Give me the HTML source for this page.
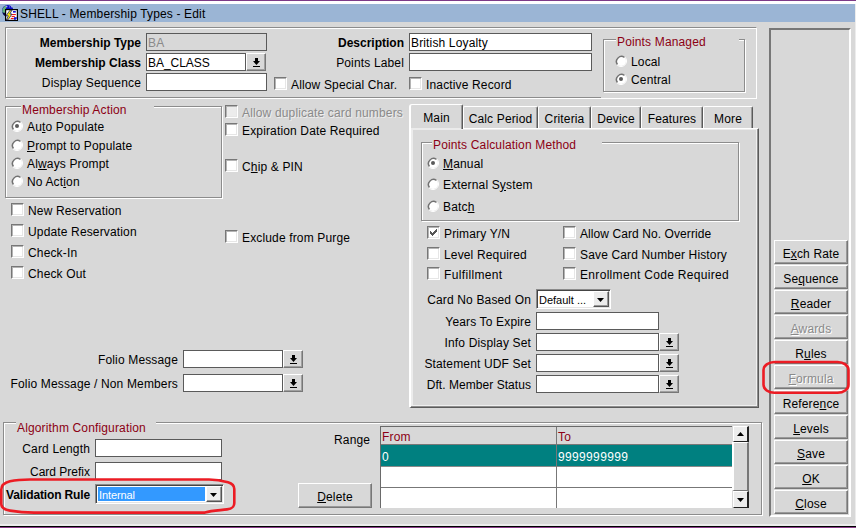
<!DOCTYPE html>
<html>
<head>
<meta charset="utf-8">
<title>SHELL - Membership Types - Edit</title>
<style>
html,body{margin:0;padding:0}
body{width:856px;height:528px;position:relative;overflow:hidden;background:#d8d8d8;font-family:"Liberation Sans",sans-serif;font-size:12px;letter-spacing:.15px;color:#000}
div,span{box-sizing:border-box}
.a{position:absolute}
.t{position:absolute;white-space:nowrap;line-height:15px;height:15px;font-size:12px;letter-spacing:.15px}
.r{text-align:right}
.b{font-weight:bold;letter-spacing:0}
.m{color:#8c0014}
.g{color:#8a8a8a}
.btn.g{text-shadow:1px 1px 0 #fff}
u{text-decoration:underline;text-underline-offset:1px;text-decoration-thickness:1px}
.f{position:absolute;border:1px solid #5a5a5a;background:#fff;height:18px;font-size:12px;line-height:16px;padding:1px 0 0 1px;white-space:nowrap;overflow:hidden}
.cb{position:absolute;width:13px;height:13px;background:#fff;border-top:1px solid #777;border-left:1px solid #777;border-right:1px solid #fff;border-bottom:1px solid #fff;box-shadow:inset 1px 1px 0 #b4b4b4,inset -1px -1px 0 #e6e6e6}
.cb.d{background:#ececec}
.rb{position:absolute;width:12px;height:12px;border-radius:50%;background:#fff;border:1px solid #fff;border-top-color:#777;border-left-color:#777;box-shadow:inset 1px 1px 0 #aaa}
.rb.on:after{content:"";position:absolute;left:3px;top:3px;width:4px;height:4px;border-radius:50%;background:#555}
.lb{position:absolute;width:20px;height:18px;background:#d8d8d8;border-top:1px solid #fff;border-left:1px solid #fff;border-right:1px solid #777;border-bottom:1px solid #777;box-shadow:inset -1px -1px 0 #a0a0a0}
.lb svg{position:absolute;left:6px;top:4px}
.gb{position:absolute;border:1px solid #8c8c8c;box-shadow:1px 1px 0 #fff,inset 1px 1px 0 #fff}
.gt{position:absolute;white-space:nowrap;line-height:15px;height:15px;font-size:12px;color:#8c0014;background:#d8d8d8;padding:0 1px}
.btn{position:absolute;left:774px;width:74px;height:24px;background:#d8d8d8;border-top:1px solid #fff;border-left:1px solid #fff;border-right:1px solid #777;border-bottom:1px solid #777;box-shadow:inset -1px -1px 0 #999;text-align:center;font-size:12px;line-height:26px}
.tab{position:absolute;top:106px;height:22px;background:#d8d8d8;border-top:1px solid #fff;border-left:1px solid #fff;border-right:1px solid #5a5a5a;border-radius:2px 2px 0 0;box-shadow:inset -1px 0 0 #9a9a9a;text-align:center;font-size:12px;line-height:25px}
</style>
</head>
<body>
<!-- window chrome -->
<div class="a" style="left:0;top:0;width:856px;height:1px;background:#7d3a86"></div>
<div class="a" style="left:0;top:1px;width:856px;height:3px;background:#fff"></div>
<div class="a" style="left:0;top:4px;width:855px;height:18px;background:#9bb5d5"></div>
<div class="a" style="left:855px;top:4px;width:1px;height:520px;background:#ececec"></div>
<div class="a" style="left:0;top:524px;width:856px;height:2px;background:#ececec"></div>
<div class="a" style="left:0;top:526px;width:856px;height:1px;background:#000"></div>
<div class="a" style="left:0;top:527px;width:856px;height:1px;background:#8a3f8a"></div>
<!-- title icon -->
<svg class="a" style="left:0;top:4px" width="20" height="18" viewBox="0 4 20 18">
<circle cx="7.700" cy="10.500" r="5.600" fill="#0a0ac0"/>
<path d="M2.300 12 C2 9 3.500 6.500 6 5.500 L6.500 7.500 L5 10 L5.500 13 L4 14.500 Z" fill="#5fb27e"/>
<path d="M2.400 12.500 C3 15 4.500 16 6 16.200 L6 13 Z" fill="#08084a"/>
<rect x="5.800" y="5.800" width="1.600" height="1.400" fill="#a9a4e8"/>
<rect x="9" y="6.300" width="1.200" height="1.200" fill="#6f6fe0"/>
<rect x="11" y="6.300" width="1.200" height="1" fill="#c8c8f4"/>
<rect x="5.600" y="9.600" width="11.800" height="10.800" fill="#fff" stroke="#000" stroke-width="1.200"/>
<rect x="13" y="11" width="2.800" height="1.600" fill="#1414d2"/>
<rect x="12" y="14" width="3.800" height="1.100" fill="#f01414"/>
<rect x="11.600" y="16" width="3.200" height="1.100" fill="#f01414"/>
<rect x="10.800" y="18" width="3" height="1.100" fill="#f01414"/>
<rect x="14" y="17.200" width="2.800" height="2.600" fill="#1414d2"/>
<rect x="15.800" y="18.800" width="1" height="1" fill="#fff"/>
<path d="M12 10.200 L10 10.200 L6 15.800 L8.400 15.800 L6.400 19.800 L8 19.800 L12 14 L9.800 14 Z" fill="#fff200" stroke="#14146e" stroke-width=".8"/>
</svg>
<div class="t" style="left:20px;top:7px;">SHELL - Membership Types - Edit</div>

<!-- top frame -->
<div class="a" style="left:5px;top:27px;width:752px;height:72px;border-top:1px solid #8c8c8c;border-left:1px solid #8c8c8c;border-right:1px solid #fff;border-bottom:1px solid #fff;box-shadow:inset 1px 1px 0 #fff"></div>
<div class="a" style="left:6px;top:97px;width:595px;height:1px;background:#8c8c8c"></div>

<div class="t r b" style="left:0;width:141px;top:36px">Membership Type</div>
<div class="t r b" style="left:0;width:141px;top:56px">Membership Class</div>
<div class="t r" style="left:0;width:141px;top:76px">Display Sequence</div>
<div class="f g" style="left:146px;top:33px;width:121px;background:#d8d8d8">BA</div>
<div class="f" style="left:146px;top:53px;width:100px;letter-spacing:-.03px">BA_CLASS</div>
<div class="lb" style="left:246px;top:53px"><svg width="7" height="9" viewBox="0 0 7 9"><path d="M2 0h3v3h2l-3.500 4l-3.500-4h2z M0 8h7v1h-7z" fill="#000"/></svg></div>
<div class="f" style="left:146px;top:73px;width:121px"></div>
<div class="cb" style="left:274px;top:77px"></div>
<div class="t" style="left:291px;top:78px">Allow Special Char.</div>

<div class="t r b" style="left:300px;width:104px;top:36px">Description</div>
<div class="t r" style="left:300px;width:104px;top:56px">Points Label</div>
<div class="f" style="left:409px;top:33px;width:183px">British Loyalty</div>
<div class="f" style="left:409px;top:53px;width:183px"></div>
<div class="cb" style="left:409px;top:77px"></div>
<div class="t" style="left:426px;top:78px">Inactive Record</div>

<div class="gb" style="left:603px;top:39px;width:142px;height:53px"></div>
<div class="gt" style="left:616px;top:35px;width:123px">Points Managed</div>
<svg class="a" style="left:615px;top:55px" width="12" height="12" viewBox="0 0 12 12"><circle cx="6" cy="6" r="5" fill="#fff"/><path d="M2.500 9.500A5 5 0 0 1 9.500 2.500" stroke="#727272" stroke-width="1.500" fill="none"/><path d="M9.900 2.100A5.500 5.500 0 0 1 2.100 9.900" stroke="#fff" stroke-width="1" fill="none"/></svg>
<div class="t" style="left:631px;top:55px">Local</div>
<svg class="a" style="left:615px;top:73px" width="12" height="12" viewBox="0 0 12 12"><circle cx="6" cy="6" r="5" fill="#fff"/><path d="M2.500 9.500A5 5 0 0 1 9.500 2.500" stroke="#727272" stroke-width="1.500" fill="none"/><path d="M9.900 2.100A5.500 5.500 0 0 1 2.100 9.900" stroke="#fff" stroke-width="1" fill="none"/><circle cx="6" cy="6" r="2" fill="#5a5a5a"/></svg>
<div class="t" style="left:631px;top:73px">Central</div>

<!-- Membership Action -->
<div class="gb" style="left:5px;top:106px;width:217px;height:92px"></div>
<div class="gt" style="left:21px;top:103px;width:133px">Membership Action</div>
<svg class="a" style="left:11px;top:120px" width="12" height="12" viewBox="0 0 12 12"><circle cx="6" cy="6" r="5" fill="#fff"/><path d="M2.500 9.500A5 5 0 0 1 9.500 2.500" stroke="#727272" stroke-width="1.500" fill="none"/><path d="M9.900 2.100A5.500 5.500 0 0 1 2.100 9.900" stroke="#fff" stroke-width="1" fill="none"/><circle cx="6" cy="6" r="2" fill="#5a5a5a"/></svg>
<div class="t" style="left:27px;top:120px">Au<u>t</u>o Populate</div>
<svg class="a" style="left:11px;top:139px" width="12" height="12" viewBox="0 0 12 12"><circle cx="6" cy="6" r="5" fill="#fff"/><path d="M2.500 9.500A5 5 0 0 1 9.500 2.500" stroke="#727272" stroke-width="1.500" fill="none"/><path d="M9.900 2.100A5.500 5.500 0 0 1 2.100 9.900" stroke="#fff" stroke-width="1" fill="none"/></svg>
<div class="t" style="left:27px;top:139px"><u>P</u>rompt to Populate</div>
<svg class="a" style="left:11px;top:157px" width="12" height="12" viewBox="0 0 12 12"><circle cx="6" cy="6" r="5" fill="#fff"/><path d="M2.500 9.500A5 5 0 0 1 9.500 2.500" stroke="#727272" stroke-width="1.500" fill="none"/><path d="M9.900 2.100A5.500 5.500 0 0 1 2.100 9.900" stroke="#fff" stroke-width="1" fill="none"/></svg>
<div class="t" style="left:27px;top:157px">Al<u>w</u>ays Prompt</div>
<svg class="a" style="left:11px;top:175px" width="12" height="12" viewBox="0 0 12 12"><circle cx="6" cy="6" r="5" fill="#fff"/><path d="M2.500 9.500A5 5 0 0 1 9.500 2.500" stroke="#727272" stroke-width="1.500" fill="none"/><path d="M9.900 2.100A5.500 5.500 0 0 1 2.100 9.900" stroke="#fff" stroke-width="1" fill="none"/></svg>
<div class="t" style="left:27px;top:175px">No Act<u>i</u>on</div>

<div class="cb" style="left:11px;top:203px"></div>
<div class="t" style="left:28px;top:204px">New Reservation</div>
<div class="cb" style="left:11px;top:224px"></div>
<div class="t" style="left:28px;top:225px">Update Reservation</div>
<div class="cb" style="left:11px;top:245px"></div>
<div class="t" style="left:28px;top:246px">Check-In</div>
<div class="cb" style="left:11px;top:266px"></div>
<div class="t" style="left:28px;top:267px">Check Out</div>

<!-- middle checkboxes -->
<div class="cb d" style="left:225px;top:105px"></div>
<div class="t g" style="left:242px;top:106px;text-shadow:1px 1px 0 #eee">Allow duplicate card numbers</div>
<div class="cb" style="left:225px;top:123px"></div>
<div class="t" style="left:242px;top:124px">Expiration Date Required</div>
<div class="cb" style="left:225px;top:159px"></div>
<div class="t" style="left:242px;top:160px">C<u>h</u>ip &amp; PIN</div>
<div class="cb" style="left:225px;top:230px"></div>
<div class="t" style="left:242px;top:231px">Exclude from Purge</div>

<div class="t r" style="left:0;width:178px;top:353px">Folio Message</div>
<div class="f" style="left:183px;top:350px;width:100px"></div>
<div class="lb" style="left:283px;top:350px"><svg width="7" height="9" viewBox="0 0 7 9"><path d="M2 0h3v3h2l-3.500 4l-3.500-4h2z M0 8h7v1h-7z" fill="#000"/></svg></div>
<div class="t r" style="left:0;width:178px;top:377px">Folio Message / Non Members</div>
<div class="f" style="left:183px;top:374px;width:100px"></div>
<div class="lb" style="left:283px;top:374px"><svg width="7" height="9" viewBox="0 0 7 9"><path d="M2 0h3v3h2l-3.500 4l-3.500-4h2z M0 8h7v1h-7z" fill="#000"/></svg></div>

<!-- tabs -->
<div class="a" style="left:409px;top:128px;width:350px;height:280px;border-top:1px solid #fff;border-left:2px solid #fff;border-right:1px solid #5a5a5a;border-bottom:1px solid #5a5a5a;box-shadow:inset -1px -1px 0 #8e8e8e,inset -2px -2px 0 #efefef,inset 2px 1px 0 #ececec"></div>
<div class="tab" style="left:463px;width:75px">Calc Period</div>
<div class="tab" style="left:538px;width:53px">Criteria</div>
<div class="tab" style="left:591px;width:50px">Device</div>
<div class="tab" style="left:641px;width:62px">Features</div>
<div class="tab" style="left:703px;width:50px">More</div>
<div class="tab" style="left:409px;width:54px;top:104px;height:25px;line-height:26px;border-left-width:2px;border-radius:3px 2px 0 0">Main</div>
<div class="a" style="left:411px;top:128px;width:50px;height:2px;background:#ebebeb"></div>

<div class="gb" style="left:421px;top:142px;width:318px;height:79px"></div>
<div class="gt" style="left:432px;top:138px;width:170px">Points Calculation Method</div>
<svg class="a" style="left:427px;top:157px" width="12" height="12" viewBox="0 0 12 12"><circle cx="6" cy="6" r="5" fill="#fff"/><path d="M2.500 9.500A5 5 0 0 1 9.500 2.500" stroke="#727272" stroke-width="1.500" fill="none"/><path d="M9.900 2.100A5.500 5.500 0 0 1 2.100 9.900" stroke="#fff" stroke-width="1" fill="none"/><circle cx="6" cy="6" r="2" fill="#5a5a5a"/></svg>
<div class="t" style="left:443px;top:157px"><u>M</u>anual</div>
<svg class="a" style="left:427px;top:178px" width="12" height="12" viewBox="0 0 12 12"><circle cx="6" cy="6" r="5" fill="#fff"/><path d="M2.500 9.500A5 5 0 0 1 9.500 2.500" stroke="#727272" stroke-width="1.500" fill="none"/><path d="M9.900 2.100A5.500 5.500 0 0 1 2.100 9.900" stroke="#fff" stroke-width="1" fill="none"/></svg>
<div class="t" style="left:443px;top:178px">External S<u>y</u>stem</div>
<svg class="a" style="left:427px;top:200px" width="12" height="12" viewBox="0 0 12 12"><circle cx="6" cy="6" r="5" fill="#fff"/><path d="M2.500 9.500A5 5 0 0 1 9.500 2.500" stroke="#727272" stroke-width="1.500" fill="none"/><path d="M9.900 2.100A5.500 5.500 0 0 1 2.100 9.900" stroke="#fff" stroke-width="1" fill="none"/></svg>
<div class="t" style="left:443px;top:200px">Batc<u>h</u></div>

<div class="cb" style="left:427px;top:226px"><svg class="a" style="left:2px;top:2px" width="7" height="7" viewBox="0 0 7 7" shape-rendering="crispEdges"><path d="M0 2h1v3h-1z M1 3h1v3h-1z M2 4h1v3h-1z M3 3h1v3h-1z M4 2h1v3h-1z M5 1h1v3h-1z M6 0h1v3h-1z" fill="#555"/></svg></div>
<div class="t" style="left:444px;top:227px">Primary Y/N</div>
<div class="cb" style="left:427px;top:247px"></div>
<div class="t" style="left:444px;top:248px">Level Required</div>
<div class="cb" style="left:427px;top:267px"></div>
<div class="t" style="left:444px;top:268px;letter-spacing:.35px">Fulfillment</div>
<div class="cb" style="left:563px;top:226px"></div>
<div class="t" style="left:580px;top:227px;letter-spacing:.08px">Allow Card No. Override</div>
<div class="cb" style="left:563px;top:247px"></div>
<div class="t" style="left:580px;top:248px">Save Card Number History</div>
<div class="cb" style="left:563px;top:267px"></div>
<div class="t" style="left:580px;top:268px;letter-spacing:.32px">Enrollment Code Required</div>

<div class="t r" style="left:400px;width:131px;top:293px">Card No Based On</div>
<div class="t r" style="left:400px;width:131px;top:315px">Years To Expire</div>
<div class="t r" style="left:400px;width:131px;top:336px">Info Display Set</div>
<div class="t r" style="left:400px;width:131px;top:357px">Statement UDF Set</div>
<div class="t r" style="left:400px;width:131px;top:378px;letter-spacing:.05px">Dft. Member Status</div>
<div class="a" style="left:536px;top:289px;width:75px;height:20px;background:#fff;border-top:1px solid #8a8a8a;border-left:1px solid #8a8a8a;border-right:1px solid #fff;border-bottom:1px solid #fff;box-shadow:inset 1px 1px 0 #444,inset -1px -1px 0 #e4e4e4"></div>
<div class="t" style="left:539px;top:293px;font-size:11px;letter-spacing:0">Default ...</div>
<div class="a" style="left:593px;top:291px;width:16px;height:16px;background:#ececec;border-top:1px solid #fff;border-left:1px solid #fff;border-right:1px solid #555;border-bottom:1px solid #555;box-shadow:inset -1px -1px 0 #999"><svg class="a" style="left:3px;top:6px" width="7" height="4" viewBox="0 0 7 4"><path d="M0 0h7l-3.500 4z" fill="#000"/></svg></div>
<div class="f" style="left:536px;top:312px;width:123px"></div>
<div class="f" style="left:536px;top:333px;width:123px"></div>
<div class="lb" style="left:659px;top:333px"><svg width="7" height="9" viewBox="0 0 7 9"><path d="M2 0h3v3h2l-3.500 4l-3.500-4h2z M0 8h7v1h-7z" fill="#000"/></svg></div>
<div class="f" style="left:536px;top:354px;width:123px"></div>
<div class="lb" style="left:659px;top:354px"><svg width="7" height="9" viewBox="0 0 7 9"><path d="M2 0h3v3h2l-3.500 4l-3.500-4h2z M0 8h7v1h-7z" fill="#000"/></svg></div>
<div class="f" style="left:536px;top:375px;width:123px"></div>
<div class="lb" style="left:659px;top:375px"><svg width="7" height="9" viewBox="0 0 7 9"><path d="M2 0h3v3h2l-3.500 4l-3.500-4h2z M0 8h7v1h-7z" fill="#000"/></svg></div>

<!-- right button panel -->
<div class="a" style="left:769px;top:28px;width:82px;height:489px;border-top:2px solid #777;border-left:2px solid #777;border-right:2px solid #fff;border-bottom:2px solid #fff"></div>
<div class="btn" style="top:240px">E<u>x</u>ch Rate</div>
<div class="btn" style="top:265px">Se<u>q</u>uence</div>
<div class="btn" style="top:290px"><u>R</u>eader</div>
<div class="btn g" style="top:315px"><u>A</u>wards</div>
<div class="btn" style="top:340px">R<u>u</u>les</div>
<div class="btn g" style="top:365px"><u>F</u>ormula</div>
<div class="btn" style="top:390px">Refere<u>n</u>ce</div>
<div class="btn" style="top:415px"><u>L</u>evels</div>
<div class="btn" style="top:440px"><u>S</u>ave</div>
<div class="btn" style="top:465px"><u>O</u>K</div>
<div class="btn" style="top:490px"><u>C</u>lose</div>

<!-- Algorithm Configuration -->
<div class="gb" style="left:3px;top:422px;width:759px;height:93px"></div>
<div class="gt" style="left:16px;top:421px;width:140px">Algorithm Configuration</div>
<div class="t r" style="left:0;width:90px;top:442px">Card Length</div>
<div class="t r" style="left:0;width:90px;top:465px;letter-spacing:0">Card Prefix</div>
<div class="t r b" style="left:0;width:90px;top:488px;letter-spacing:-.14px">Validation Rule</div>
<div class="f" style="left:95px;top:439px;width:127px"></div>
<div class="f" style="left:95px;top:462px;width:127px"></div>
<div class="a" style="left:95px;top:484px;width:129px;height:20px;background:#fff;border-top:1px solid #8a8a8a;border-left:1px solid #8a8a8a;border-right:1px solid #fff;border-bottom:1px solid #fff;box-shadow:inset 1px 1px 0 #444,inset -1px -1px 0 #e4e4e4"></div>
<div class="a" style="left:98px;top:487px;width:107px;height:14px;background:#3399ff"></div>
<div class="t" style="left:99px;top:488px;font-size:11px;letter-spacing:-.1px;color:#fff">Internal</div>
<div class="a" style="left:206px;top:486px;width:16px;height:16px;background:#ececec;border-top:1px solid #fff;border-left:1px solid #fff;border-right:1px solid #555;border-bottom:1px solid #555;box-shadow:inset -1px -1px 0 #999"><svg class="a" style="left:3px;top:6px" width="7" height="4" viewBox="0 0 7 4"><path d="M0 0h7l-3.500 4z" fill="#000"/></svg></div>

<div class="t" style="left:334px;top:433px">Range</div>
<div class="btn" style="left:298px;top:483px;width:74px;height:25px"><u>D</u>elete</div>

<!-- range table -->
<div class="a" style="left:380px;top:426px;width:352px;height:82px;background:#fff;border-top:1px solid #6a6a6a;border-left:1px solid #6a6a6a"></div>
<div class="a" style="left:381px;top:427px;width:351px;height:17px;background:#d8d8d8"></div>
<div class="a" style="left:381px;top:444px;width:351px;height:1px;background:#777"></div>
<div class="a" style="left:381px;top:445px;width:351px;height:21px;background:#008080"></div>
<div class="a" style="left:381px;top:466px;width:351px;height:1px;background:#8a8a8a"></div>
<div class="a" style="left:381px;top:487px;width:351px;height:1px;background:#777"></div>
<div class="a" style="left:556px;top:427px;width:1px;height:81px;background:#777"></div>
<div class="t m" style="left:382px;top:430px">From</div>
<div class="t m" style="left:558px;top:430px">To</div>
<div class="t" style="left:382px;top:450px;color:#fff">0</div>
<div class="t" style="left:558px;top:450px;color:#fff;letter-spacing:.35px">9999999999</div>
<!-- scrollbar -->
<div class="a" style="left:732px;top:442px;width:17px;height:49px;background:#d8d8d8;border-top:1px solid #fff;border-left:2px solid #fff;border-right:2px solid #777;border-bottom:1px solid #777"></div>
<div class="a" style="left:733px;top:426px;width:16px;height:16px;background:#ececec;border-top:1px solid #fff;border-left:1px solid #fff;border-right:2px solid #222;border-bottom:1px solid #222"><svg class="a" style="left:3px;top:5px" width="7" height="4" viewBox="0 0 7 4"><path d="M0 4h7l-3.500-4z" fill="#000"/></svg></div>
<div class="a" style="left:733px;top:491px;width:16px;height:17px;background:#ececec;border-top:1px solid #fff;border-left:1px solid #fff;border-right:2px solid #222;border-bottom:1px solid #222"><svg class="a" style="left:3px;top:6px" width="7" height="4" viewBox="0 0 7 4"><path d="M0 0h7l-3.500 4z" fill="#000"/></svg></div>

<!-- red annotations -->
<svg class="a" style="left:0;top:0" width="856" height="528" viewBox="0 0 856 528">
<path d="M1.300 496 L1.300 489.500 C1.300 485.500 3.500 482.800 10 481.200 C16 479.900 22 479.500 30 479.500 L209 479.500 C215 479.500 223 480.800 228 482.200 C232.500 483.500 234.300 485.500 234.300 489 L234.300 503 C234.300 507 232.500 508.500 227 509.400 C221 510.300 212 510.300 205 512.600 L34 512.600 C26 512.600 18 512 10 510.600 C4 509.600 1.300 508 1.300 504 Z" fill="none" stroke="#ec1c24" stroke-width="2.600" stroke-linejoin="round"/>
<rect x="763.500" y="362" width="85" height="30.800" rx="11" ry="8" fill="none" stroke="#ec1c24" stroke-width="2.600"/>
</svg>
</body>
</html>
